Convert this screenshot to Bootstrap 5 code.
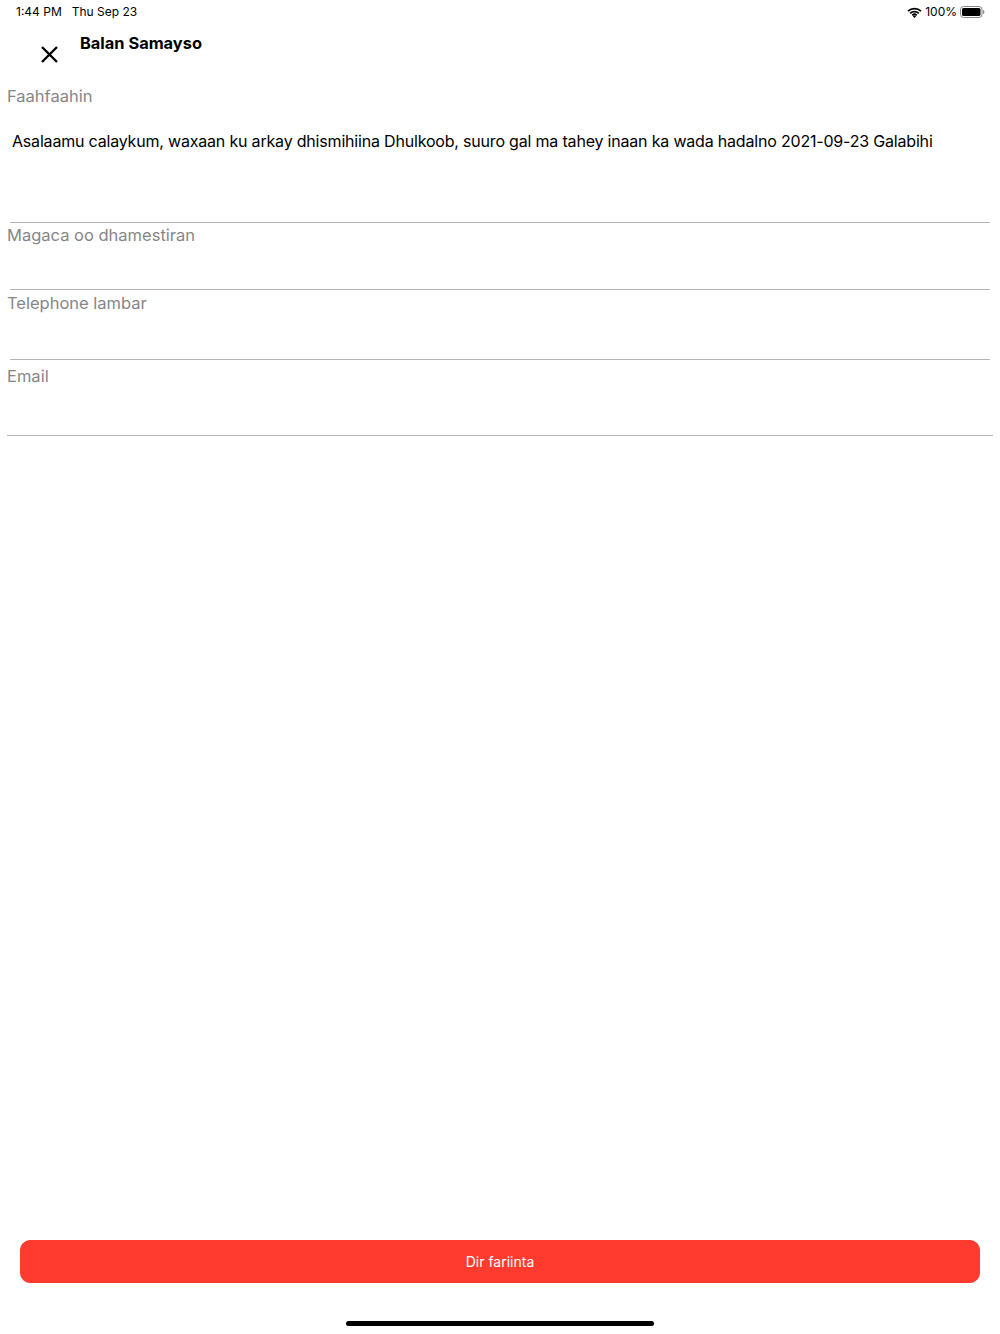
<!DOCTYPE html>
<html lang="en">
<head>
  <meta charset="UTF-8" />
  <meta name="viewport" content="width=device-width, initial-scale=1" />
  <title>Balan Samayso</title>
  <link href="https://cdn.jsdelivr.net/npm/bootstrap@5.3.3/dist/css/bootstrap.min.css" rel="stylesheet" />
  <style>
    body {
      height: 1334px;
      overflow: hidden;
      font-family: Inter, "Liberation Sans", sans-serif;
      color: #000;
      background: #fff;
    }
    .status-row {
      height: 24px;
      padding: 0 15px 0 16px;
      font-size: 12px;
    }
    .status-left { gap: 10px; }
    .status-gap { gap: 3px; }
    .head-row { height: 54px; }
    .close-btn {
      width: 80px;
      padding: 21px 0 0 40px;
      background: none;
      border: 0;
      align-self: flex-start;
      line-height: 0;
      text-align: left;
    }
    .head-title {
      font-size: 16.4px;
      font-weight: 700;
      line-height: 20px;
      margin-top: 9px;
    }
    .form-area { padding: 0 7px; }
    .field-label {
      display: block;
      margin: 0;
      font-size: 16.5px;
      line-height: 22px;
      color: #868689;
    }
    .field-value {
      margin: 0 3px;
      border-bottom: 1px solid #b4b4b4;
    }
    .desc-value {
      height: 116px;
      padding: 23px 2px 0;
      font-size: 16px;
      letter-spacing: -.19px;
      line-height: 22px;
    }
    .name-value { height: 44px; }
    .phone-value { height: 46px; }
    .mail-value { height: 49px; margin: 0; }
    .label-first { margin-top: 7px; }
    .label-mail { margin-top: 5px; }
    .label-name { margin-top: 1px; }
    .label-phone { margin-top: 2px; }
    .send-btn {
      display: block;
      width: 960px;
      height: 43px;
      margin: 0 auto 0 20px;
      padding: 0;
      background: #ff3b30;
      border-color: #ff3b30;
      border-radius: 10px;
      color: #fff;
      font-size: 14px;
    }
    .home-bar {
      width: 308px;
      height: 5px;
      margin: 38px auto 8px;
      background: #000;
      border-radius: 3px;
    }
  </style>
</head>
<body>
<div class="d-flex flex-column h-100">

  <!-- status bar -->
  <div class="status-row d-flex align-items-center justify-content-between">
    <div class="d-flex status-left"><span>1:44 PM</span><span>Thu Sep 23</span></div>
    <div class="d-flex align-items-center status-gap">
      <svg width="15" height="11" viewBox="0 0 15 11">
        <path d="M1 4.2a9.3 9.3 0 0 1 13 0M3.2 6.3a6.2 6.2 0 0 1 8.6 0M5.3 8.3a3.2 3.2 0 0 1 4.4 0" fill="none" stroke="#000" stroke-width="1.7"/>
        <path d="M7.500 11 5.900 9.300a2.300 2.300 0 0 1 3.200 0z" fill="#000"/>
      </svg>
      <span>100%</span>
      <svg width="25" height="12" viewBox="0 0 25 12">
        <rect x=".5" y=".5" width="21.500" height="11" rx="3" fill="none" stroke="#888"/>
        <rect x="2" y="2" width="18.500" height="8" rx="1.600" fill="#000"/>
        <path d="M23 4v4c.9-.3 1.400-1.100 1.400-2s-.5-1.700-1.400-2z" fill="#888"/>
      </svg>
    </div>
  </div>

  <!-- header -->
  <div class="head-row d-flex">
    <button class="close-btn" type="button" aria-label="Close">
      <svg width="19" height="19" viewBox="0 0 19 19">
        <path d="M2 2l15 15M17 2 2 17" stroke="#000" stroke-width="2.400" fill="none"/>
      </svg>
    </button>
    <div class="head-title">Balan Samayso</div>
  </div>

  <!-- form -->
  <div class="form-area">
    <label class="field-label label-first">Faahfaahin</label>
    <div class="field-value desc-value">Asalaamu calaykum, waxaan ku arkay dhismihiina Dhulkoob, suuro gal ma tahey inaan ka wada hadalno 2021-09-23 Galabihi</div>
    <label class="field-label label-name">Magaca oo dhamestiran</label>
    <div class="field-value name-value"></div>
    <label class="field-label label-phone">Telephone lambar</label>
    <div class="field-value phone-value"></div>
    <label class="field-label label-mail">Email</label>
    <div class="field-value mail-value"></div>
  </div>

  <!-- bottom -->
  <div class="mt-auto">
    <button class="btn send-btn" type="button">Dir fariinta</button>
    <div class="home-bar"></div>
  </div>
</div>
<script src="https://cdn.jsdelivr.net/npm/bootstrap@5.3.3/dist/js/bootstrap.bundle.min.js"></script>
</body>
</html>
